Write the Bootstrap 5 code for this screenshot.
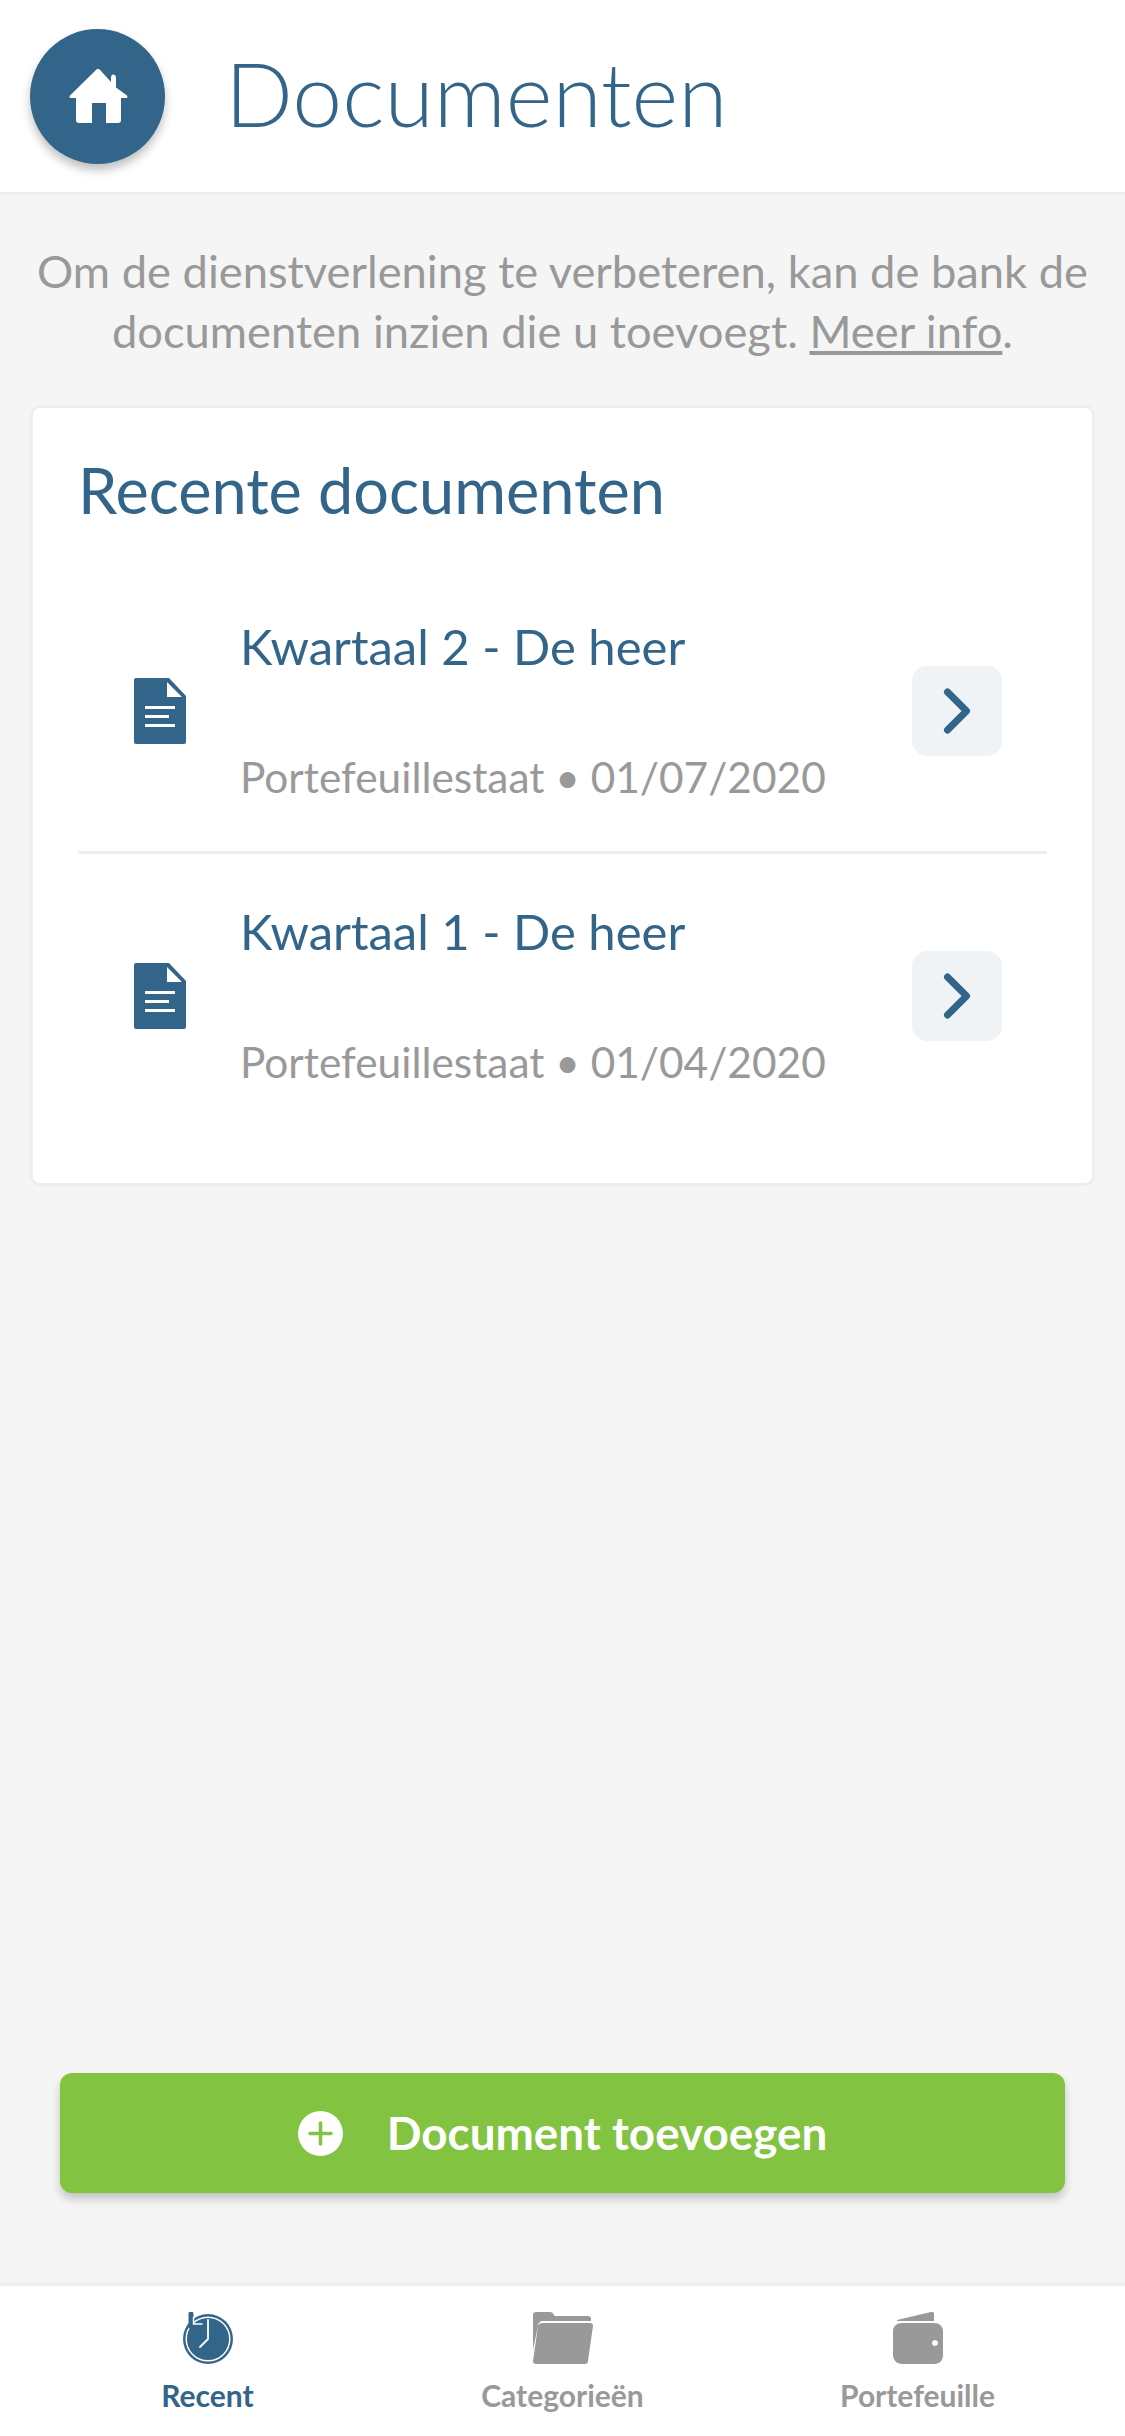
<!DOCTYPE html>
<html lang="nl">
<head>
    <meta charset="UTF-8">
    <meta name="viewport" content="width=device-width, initial-scale=1.0">
    <title>Documenten</title>
    <link rel="stylesheet" href="https://cdn.jsdelivr.net/npm/bootstrap@5.3.2/dist/css/bootstrap.min.css">
    <style>
        body {
            font-family: "Lato", "Liberation Sans", sans-serif;
            background: #f5f5f5;
            color: #999;
            height: 2436px;
        }
        .app-head {
            height: 195px;
            background: #fff;
            border-bottom: 3px solid #eee;
            padding-left: 30px;
        }
        .home-btn {
            width: 135px;
            height: 135px;
            border-radius: 50%;
            background: #33658a;
            box-shadow: 0 6px 10px rgba(0, 0, 0, .25);
        }
        .app-title {
            margin: 0 0 6px 60px;
            font-size: 89.500px;
            font-weight: 300;
            color: #33658a;
            line-height: 1;
        }
        .intro {
            margin: 46px 20px 44px;
            font-size: 45.300px;
            line-height: 60px;
            font-weight: 400;
            text-align: center;
            color: #999;
        }
        .intro a { color: #999; }
        .doc-card {
            margin: 0 30px;
            padding: 46px 45px;
            border: 3px solid #eee;
            border-radius: 10px;
        }
        .doc-card h2 {
            font-size: 63px;
            font-weight: 400;
            color: #33658a;
            margin: 0 0 45px;
            line-height: 72px;
        }
        .doc-row {
            height: 283px;
            padding: 0 45px 0 56px;
            border-bottom: 3px solid #eee;
        }
        .doc-row:last-child { border-bottom: 0; }
        .doc-info {
            margin-left: 54px;
            padding-bottom: 3px;
        }
        .doc-name {
            font-size: 49px;
            line-height: 60px;
            color: #33658a;
            margin-bottom: 75px;
        }
        .doc-meta {
            font-size: 42.400px;
            line-height: 52px;
            color: #999;
        }
        .go-btn {
            width: 90px;
            height: 90px;
            border: 0;
            border-radius: 15px;
            background: #eff3f6;
        }
        .add-btn {
            height: 120px;
            margin: 0 60px 90px;
            background: #82c341;
            border: 0;
            border-radius: 12px;
            color: #fff;
            font-size: 45.800px;
            font-weight: 700;
            box-shadow: 0 6px 10px rgba(0, 0, 0, .2);
        }
        .add-btn svg { margin-right: 44px; }
        .add-btn:hover { background: #82c341; color: #fff; }
        .tab-bar {
            height: 153px;
            background: #fff;
            border-top: 3px solid #eee;
            padding: 26px 30px 0;
        }
        .tab-item {
            width: 355px;
            font-size: 30px;
            font-weight: 700;
            color: #999;
            text-decoration: none;
            line-height: 34px;
        }
        .tab-item.active { color: #33658a; }
        .tab-item svg { margin-bottom: 14px; }
    </style>
</head>

<body class="d-flex flex-column">
    <header class="app-head d-flex align-items-center">
        <a href="#" class="home-btn d-flex align-items-center justify-content-center">
            <svg width="60" height="54" viewBox="0 0 60 54" aria-hidden="true">
                <path fill="#fff" d="M30 0c1 0 2 .6 3 2l10 11V9c0-2.500 1-3.500 2.300-3.500S48 6.500 48 9v9.500l11 8c1 1 .5 2.500-1 2.500h-5v22c0 2-1 3-3 3H38V34H24v20H11c-2 0-3-1-3-3V29H3c-1.500 0-2-1.500-1-2.500L27 2c1-1.400 2-2 3-2z"/>
            </svg>
        </a>
        <h1 class="app-title">Documenten</h1>
    </header>

    <main class="flex-grow-1">
        <p class="intro">Om de dienstverlening te verbeteren, kan de bank de documenten inzien die u toevoegt. <a href="#">Meer info</a>.</p>

        <section class="doc-card card">
            <h2>Recente documenten</h2>
            <div class="doc-row d-flex align-items-center">
                <svg width="52" height="66" viewBox="0 0 52 66" aria-hidden="true">
                    <path fill="#33658a" d="M2 0h33l17 18v46a2 2 0 0 1-2 2H2a2 2 0 0 1-2-2V2a2 2 0 0 1 2-2z"/>
                    <path fill="#fff" d="M33 4v15h15zM11 28h30v3H11zM11 37h24v3H11zM11 46h30v3H11z"/>
                </svg>
                <div class="doc-info flex-grow-1">
                    <div class="doc-name">Kwartaal 2 - De heer</div>
                    <div class="doc-meta">Portefeuillestaat • 01/07/2020</div>
                </div>
                <button class="go-btn btn d-flex align-items-center justify-content-center" type="button" aria-label="Openen">
                    <svg width="30" height="48" viewBox="0 0 30 48" aria-hidden="true">
                        <path d="M5.500 5l19 19-19 19" fill="none" stroke="#33658a" stroke-width="7" stroke-linecap="round" stroke-linejoin="round"/>
                    </svg>
                </button>
            </div>
            <div class="doc-row d-flex align-items-center">
                <svg width="52" height="66" viewBox="0 0 52 66" aria-hidden="true">
                    <path fill="#33658a" d="M2 0h33l17 18v46a2 2 0 0 1-2 2H2a2 2 0 0 1-2-2V2a2 2 0 0 1 2-2z"/>
                    <path fill="#fff" d="M33 4v15h15zM11 28h30v3H11zM11 37h24v3H11zM11 46h30v3H11z"/>
                </svg>
                <div class="doc-info flex-grow-1">
                    <div class="doc-name">Kwartaal 1 - De heer</div>
                    <div class="doc-meta">Portefeuillestaat • 01/04/2020</div>
                </div>
                <button class="go-btn btn d-flex align-items-center justify-content-center" type="button" aria-label="Openen">
                    <svg width="30" height="48" viewBox="0 0 30 48" aria-hidden="true">
                        <path d="M5.500 5l19 19-19 19" fill="none" stroke="#33658a" stroke-width="7" stroke-linecap="round" stroke-linejoin="round"/>
                    </svg>
                </button>
            </div>
        </section>
    </main>

    <button class="add-btn btn d-flex align-items-center justify-content-center" type="button">
        <svg width="45" height="45" viewBox="0 0 45 45" aria-hidden="true">
            <circle cx="22.500" cy="22.500" r="22.500" fill="#fff"/>
            <path d="M22.500 12v21M12 22.500h21" stroke="#82c341" stroke-width="3.500" stroke-linecap="round"/>
        </svg>
        Document toevoegen
    </button>

    <nav class="tab-bar d-flex">
        <a href="#" class="tab-item active d-flex flex-column align-items-center">
            <svg width="50" height="52" viewBox="0 0 50 52" aria-hidden="true">
                <circle cx="25" cy="27" r="25" fill="#33658a"/>
                <circle cx="25" cy="27" r="21.800" fill="none" stroke="#fff" stroke-width="1.500"/>
                <path d="M8 2v12h11" fill="none" stroke="#33658a" stroke-width="5" stroke-linecap="round"/>
                <path d="M10.500 5v7h9" fill="none" stroke="#fff" stroke-width="1.500"/>
                <path d="M25 8v19l-8 8" fill="none" stroke="#fff" stroke-width="1.800" stroke-linecap="round" stroke-linejoin="round"/>
            </svg>
            Recent
        </a>
        <a href="#" class="tab-item d-flex flex-column align-items-center">
            <svg width="60" height="52" viewBox="0 0 60 52" aria-hidden="true">
                <path fill="#999" d="M3 0h14c2 0 3 1 4 3l1 1h33c2 0 3 1 3 3v2H10c-3 0-5 2-5 5L0 38V3c0-2 1-3 3-3z"/>
                <path fill="#999" d="M10 11h47c2 0 3 1 3 3l-5 35c0 2-1 3-3 3H3c-2 0-3-1-3-3l5-35c.3-2 2-3 5-3z"/>
            </svg>
            Categorieën
        </a>
        <a href="#" class="tab-item d-flex flex-column align-items-center">
            <svg width="50" height="52" viewBox="0 0 50 52" aria-hidden="true">
                <path fill="#999" d="M4 8L38 0c2-.400 3 .500 3 2v7H4z"/>
                <path fill="#999" fill-rule="evenodd" d="M9 11h32c5 0 9 3 9 8v24c0 5-3 9-9 9H9c-5 0-9-4-9-9V19c0-5 4-8 9-8zm33 17a3 3 0 1 0 .01 0z"/>
            </svg>
            Portefeuille
        </a>
    </nav>

    <script src="https://cdn.jsdelivr.net/npm/bootstrap@5.3.2/dist/js/bootstrap.bundle.min.js"></script>
</body>

</html>
